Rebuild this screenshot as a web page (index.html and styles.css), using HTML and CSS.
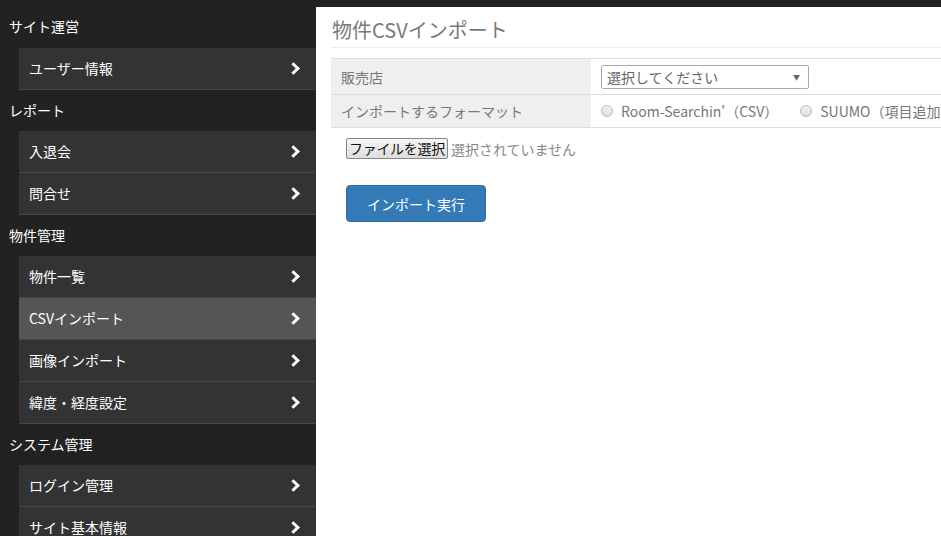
FILE: index.html
```html
<!DOCTYPE html>
<html lang="ja">
<head>
<meta charset="utf-8">
<title>物件CSVインポート</title>
<link rel="stylesheet" href="styles.css">
</head>
<body>
<div class="layout">
  <nav class="sidebar">
    <div class="nav-heading">サイト運営</div>
    <a class="nav-item">ユーザー情報<span class="chev"></span></a>
    <div class="nav-heading">レポート</div>
    <a class="nav-item">入退会<span class="chev"></span></a>
    <a class="nav-item">問合せ<span class="chev"></span></a>
    <div class="nav-heading">物件管理</div>
    <a class="nav-item">物件一覧<span class="chev"></span></a>
    <a class="nav-item active">CSVインポート<span class="chev"></span></a>
    <a class="nav-item">画像インポート<span class="chev"></span></a>
    <a class="nav-item">緯度・経度設定<span class="chev"></span></a>
    <div class="nav-heading">システム管理</div>
    <a class="nav-item">ログイン管理<span class="chev"></span></a>
    <a class="nav-item">サイト基本情報<span class="chev"></span></a>
  </nav>
  <main class="main">
    <h1 class="page-title">物件CSVインポート</h1>
    <table class="form-table">
      <tr>
        <th>販売店</th>
        <td>
          <div class="select"><span>選択してください</span><span class="arrow">▼</span></div>
        </td>
      </tr>
      <tr>
        <th>インポートするフォーマット</th>
        <td>
          <div class="radios">
            <label class="radio"><span class="dot"></span>Room-Searchin'（CSV）</label>
            <label class="radio"><span class="dot"></span>SUUMO（項目追加版）</label>
          </div>
        </td>
      </tr>
    </table>
    <div class="actions">
      <div class="file-row"><span class="file-btn">ファイルを選択</span><span class="file-none">選択されていません</span></div>
      <button class="btn-primary">インポート実行</button>
    </div>
  </main>
</div>
</body>
</html>
```

FILE: styles.css
```css
* { box-sizing: border-box; }
html, body { margin: 0; padding: 0; }
body {
  background: #222;
  font-family: "Noto Sans CJK JP", "Noto Sans", sans-serif;
  font-size: 14px;
  overflow: hidden;
  height: 536px;
}
.layout {
  display: flex;
  width: 941px;
  height: 536px;
}
.sidebar {
  width: 316px;
  flex: 0 0 316px;
  background: #222;
  padding-top: 6px;
  display: flex;
  flex-direction: column;
}
.nav-heading {
  height: 41px;
  line-height: 41px;
  padding-left: 9px;
  color: #fff;
  font-size: 14px;
  flex: 0 0 auto;
}
.nav-heading:first-child { height: 42px; }
.nav-item {
  position: relative;
  display: block;
  margin-left: 19px;
  height: 42px;
  line-height: 40px;
  padding-left: 10px;
  background: #333;
  border-bottom: 1px solid #474747;
  color: #fff;
  font-size: 14px;
  flex: 0 0 auto;
}
.nav-item.active { background: #555; }
.chev {
  position: absolute;
  right: 18px;
  top: 16px;
  width: 9px;
  height: 9px;
  border-top: 3px solid #fff;
  border-right: 3px solid #fff;
  transform: rotate(45deg);
}
.main {
  flex: 1;
  background: #fff;
  margin-top: 7px;
  padding: 0 0 0 15px;
  overflow: hidden;
}
.page-title {
  margin: 0;
  height: 41px;
  padding-top: 5px;
  line-height: 36px;
  padding-left: 1px;
  font-size: 20px;
  font-weight: normal;
  color: #7a7a7a;
  border-bottom: 1px solid #eee;
  white-space: nowrap;
}
.form-table {
  margin-top: 10px;
  border-collapse: collapse;
  width: 900px;
  white-space: nowrap;
}
.form-table th {
  width: 260px;
  background: #efefef;
  text-align: left;
  font-weight: normal;
  color: #777;
  padding: 0 10px;
  border-top: 1px solid #ddd;
  border-bottom: 1px solid #ddd;
}
.form-table td {
  padding: 0 10px;
  border-top: 1px solid #ddd;
  border-bottom: 1px solid #ddd;
  color: #777;
}
.form-table tr:first-child th, .form-table tr:first-child td { height: 36px; }
.form-table tr:nth-child(2) th, .form-table tr:nth-child(2) td { height: 33px; }
.select {
  width: 208px;
  height: 24px;
  border: 1px solid #aaa;
  border-radius: 2px;
  display: flex;
  align-items: center;
  justify-content: space-between;
  padding: 0 8px 0 5px;
  color: #666;
}
.arrow { font-size: 7px; color: #666; }
.radios { display: flex; gap: 22px; }
.radio { display: flex; align-items: center; color: #777; }
.dot {
  width: 12px;
  height: 12px;
  border-radius: 50%;
  border: 1px solid #bbb;
  background: linear-gradient(#f4f4f4, #ddd);
  margin-right: 8px;
}
.actions { padding-left: 15px; }
.file-row {
  margin-top: 10px;
  display: flex;
  align-items: center;
}
.file-btn {
  display: inline-block;
  height: 21px;
  line-height: 19px;
  padding: 0 2px;
  border: 1px solid #888;
  border-radius: 2px;
  background: linear-gradient(#f6f6f6, #dedede);
  color: #111;
  font-size: 14px;
  letter-spacing: -0.3px;
}
.file-none { margin-left: 3px; color: #888; }
.btn-primary {
  margin-top: 26px;
  width: 140px;
  height: 37px;
  background: #337ab7;
  border: 1px solid #2e6da4;
  border-radius: 4px;
  color: #fff;
  font-family: inherit;
  font-size: 14px;
  padding: 0;
}
```
